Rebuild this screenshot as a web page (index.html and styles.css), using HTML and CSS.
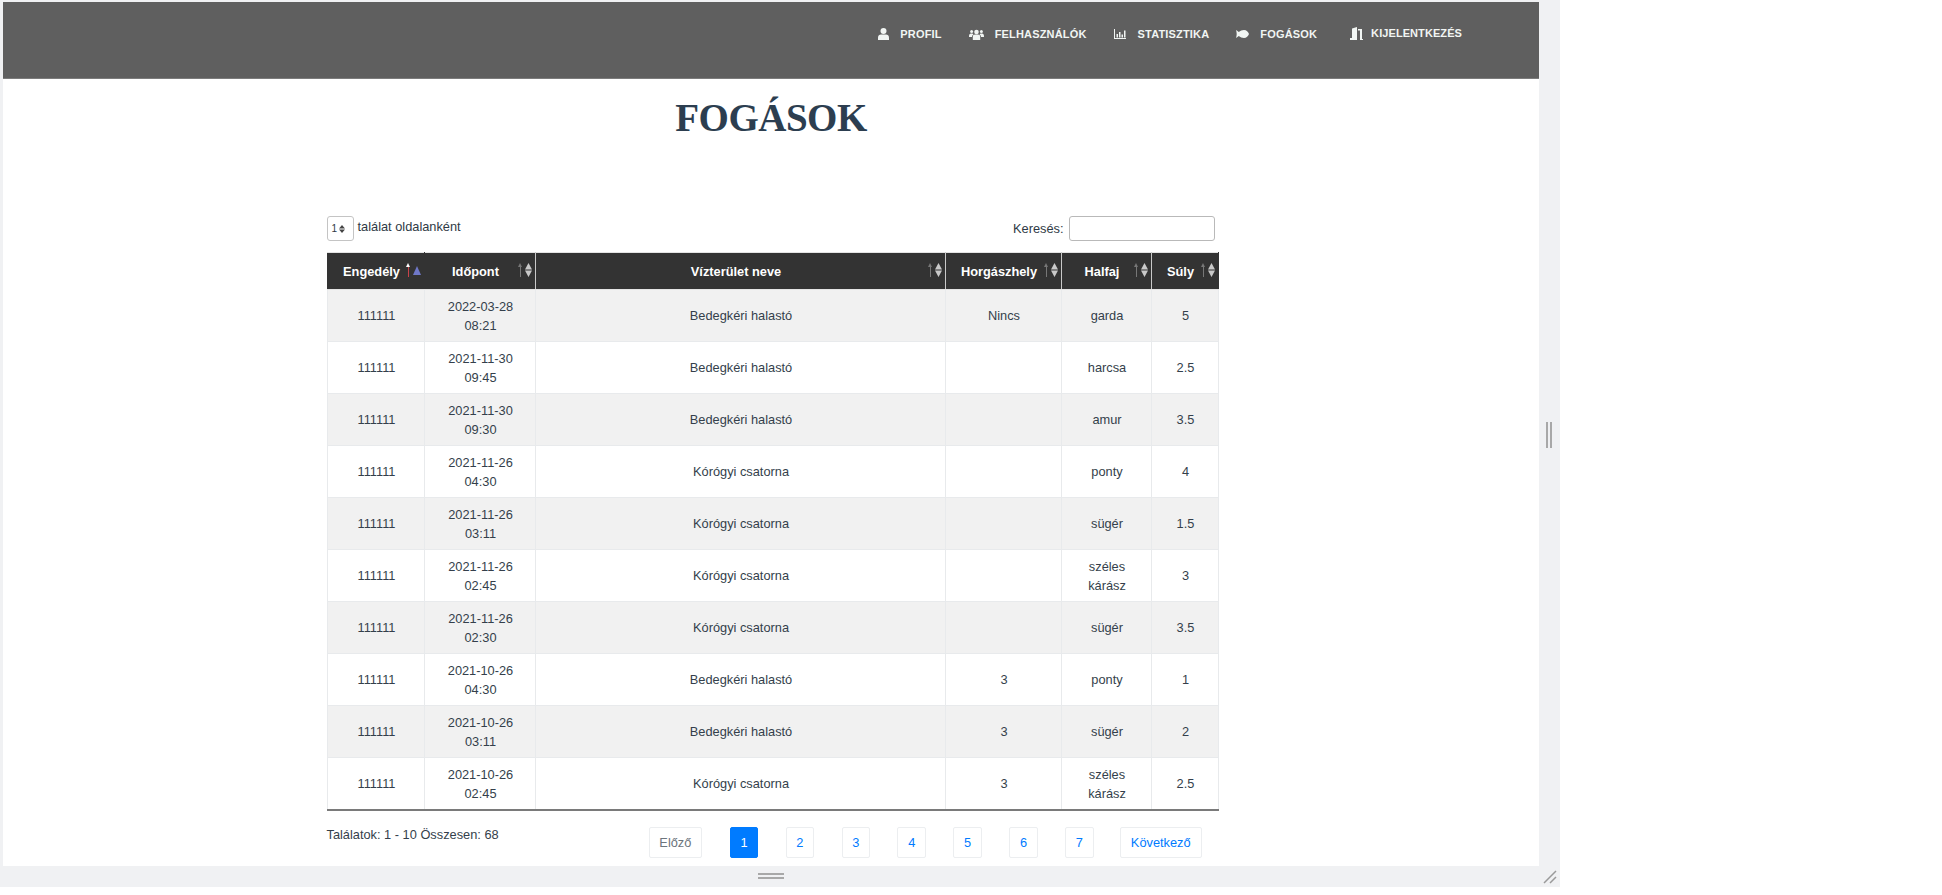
FILE: index.html
```html
<!DOCTYPE html>
<html>
<head>
    <meta charset="UTF-8">
    <title>Fogások</title>
    <link rel="stylesheet" href="styles.css">
</head>
<body>
<div class="frame">
    <div class="page">
        <nav class="nav">
            <a class="nav-link">
                <svg class="ico" width="11" height="12" viewBox="0 0 11 12"><circle cx="5.5" cy="3" r="3"/><path d="M0 12V9.5C0 7.8 1.3 6.6 3 6.6h5c1.7 0 3 1.2 3 2.9V12z"/></svg>
                PROFIL
            </a>
            <a class="nav-link">
                <svg class="ico" width="15" height="11" viewBox="0 0 15 11"><circle cx="7.5" cy="3" r="2.3"/><circle cx="2.6" cy="2.4" r="1.5"/><circle cx="12.4" cy="2.4" r="1.5"/><path d="M3.8 11V8c0-1.6 1-2.4 2.2-2.4h3c1.2 0 2.2.8 2.2 2.4v3z"/><path d="M0 7.5C0 5.5.8 4.6 2 4.6h1.5c.3.4.6.7 1 1C3.400 6 3 7 3 8H0zM15 7.500C15 5.500 14.200 4.600 13 4.600h-1.500c-.3.4-.6.7-1 1 1.100.4 1.500 1.400 1.500 2.400h3z"/></svg>
                FELHASZNÁLÓK
            </a>
            <a class="nav-link nav-link-chart">
                <svg class="ico" width="12" height="10" viewBox="0 0 12 10"><path d="M0 0h1v9h11v1H0zM2.500 5h1.500v3.500H2.500zM5 3h1.500v5.500H5zM7.500 5.500H9v3H7.500zM10 1.500h1.500v7H10z"/></svg>
                STATISZTIKA
            </a>
            <a class="nav-link">
                <svg class="ico" width="13" height="8" viewBox="0 0 13 8"><path d="M0 0c1 .6 2 1.300 2.800 2C4.300.8 6 0 8 0c2.500 0 4.200 2 5 4-.8 2-2.500 4-5 4-2 0-3.700-.8-5.200-2C2 6.700 1 7.400 0 8c.4-1.300.7-2.700.7-4S.4 1.300 0 0z"/></svg>
                FOGÁSOK
            </a>
            <a class="nav-link nav-link-door">
                <svg class="ico" width="14" height="13" viewBox="0 0 14 13"><path d="M1 13h7V0L3 1.500V11H1zM9 2h4v10h1v1h-3V3.500H9z"/></svg>
                KIJELENTKEZÉS
            </a>
        </nav>

        <h1 class="title">FOGÁSOK</h1>

        <div class="wrap">
            <div class="tools">
                <label class="length">
                    <span class="length-box">1<svg class="diamond" width="6" height="8" viewBox="0 0 6 8"><path d="M3 0l3 3.500H0zM3 8L0 4.500h6z"/></svg></span>
                    találat oldalanként
                </label>
                <label class="search">Keresés: <input class="search-input" type="text"></label>
            </div>

            <table class="catches">
                <colgroup>
                    <col class="c-lic"><col class="c-time"><col class="c-water"><col class="c-place"><col class="c-fish"><col class="c-weight">
                </colgroup>
                <thead>
                <tr>
                    <th>Engedély<span class="sort"><i class="arr arr-on"></i><svg width="8" height="9" viewBox="0 0 8 9"><path d="M4 0l4 9H0z" fill="#6f78c8"/></svg></span></th>
                    <th>Időpont<span class="sort"><i class="arr"></i><svg width="7" height="14" viewBox="0 0 7 14"><path d="M3.500 0L7 6.500H0zM3.500 14L0 7.500h7z" fill="#c9c9c9"/></svg></span></th>
                    <th>Vízterület neve<span class="sort"><i class="arr"></i><svg width="7" height="14" viewBox="0 0 7 14"><path d="M3.500 0L7 6.500H0zM3.500 14L0 7.500h7z" fill="#c9c9c9"/></svg></span></th>
                    <th>Horgászhely<span class="sort"><i class="arr"></i><svg width="7" height="14" viewBox="0 0 7 14"><path d="M3.500 0L7 6.500H0zM3.500 14L0 7.500h7z" fill="#c9c9c9"/></svg></span></th>
                    <th>Halfaj<span class="sort"><i class="arr"></i><svg width="7" height="14" viewBox="0 0 7 14"><path d="M3.500 0L7 6.500H0zM3.500 14L0 7.500h7z" fill="#c9c9c9"/></svg></span></th>
                    <th>Súly<span class="sort"><i class="arr"></i><svg width="7" height="14" viewBox="0 0 7 14"><path d="M3.500 0L7 6.500H0zM3.500 14L0 7.500h7z" fill="#c9c9c9"/></svg></span></th>
                </tr>
                </thead>
                <tbody>
                <tr><td>111111</td><td>2022-03-28<br>08:21</td><td>Bedegkéri halastó</td><td>Nincs</td><td>garda</td><td>5</td></tr>
                <tr><td>111111</td><td>2021-11-30<br>09:45</td><td>Bedegkéri halastó</td><td></td><td>harcsa</td><td>2.5</td></tr>
                <tr><td>111111</td><td>2021-11-30<br>09:30</td><td>Bedegkéri halastó</td><td></td><td>amur</td><td>3.5</td></tr>
                <tr><td>111111</td><td>2021-11-26<br>04:30</td><td>Kórógyi csatorna</td><td></td><td>ponty</td><td>4</td></tr>
                <tr><td>111111</td><td>2021-11-26<br>03:11</td><td>Kórógyi csatorna</td><td></td><td>sügér</td><td>1.5</td></tr>
                <tr><td>111111</td><td>2021-11-26<br>02:45</td><td>Kórógyi csatorna</td><td></td><td>széles<br>kárász</td><td>3</td></tr>
                <tr><td>111111</td><td>2021-11-26<br>02:30</td><td>Kórógyi csatorna</td><td></td><td>sügér</td><td>3.5</td></tr>
                <tr><td>111111</td><td>2021-10-26<br>04:30</td><td>Bedegkéri halastó</td><td>3</td><td>ponty</td><td>1</td></tr>
                <tr><td>111111</td><td>2021-10-26<br>03:11</td><td>Bedegkéri halastó</td><td>3</td><td>sügér</td><td>2</td></tr>
                <tr><td>111111</td><td>2021-10-26<br>02:45</td><td>Kórógyi csatorna</td><td>3</td><td>széles<br>kárász</td><td>2.5</td></tr>
                </tbody>
            </table>

            <div class="foot">
                <div class="info">Találatok: 1 - 10 Összesen: 68</div>
                <div class="pager">
                    <a class="pg pg-prev">Előző</a>
                    <a class="pg pg-num pg-active">1</a>
                    <a class="pg pg-num">2</a>
                    <a class="pg pg-num">3</a>
                    <a class="pg pg-num">4</a>
                    <a class="pg pg-num">5</a>
                    <a class="pg pg-num">6</a>
                    <a class="pg pg-num">7</a>
                    <a class="pg pg-next">Következő</a>
                </div>
            </div>
        </div>
    </div>

    <span class="grip-v"></span>
    <span class="grip-h"></span>
    <svg class="grip-corner" width="14" height="14" viewBox="0 0 14 14"><path d="M1 13L13 1M7 13l6-6" stroke="#9a9a9a" stroke-width="1.500" fill="none"/></svg>
</div>
</body>
</html>
```

FILE: styles.css
```css
* {
    margin: 0;
    padding: 0;
    box-sizing: border-box;
}

html, body {
    width: 100%;
    height: 100%;
    overflow: hidden;
    background: #fff;
}

body {
    font-family: "Liberation Sans", Arial, sans-serif;
    font-size: 12.8px;
    color: #343f4b;
}

.frame {
    position: relative;
    width: 1560px;
    height: 887px;
    padding: 2px 21px 21px 3px;
    background: #f0f1f3;
}

.page {
    height: 100%;
    background: #fff;
    overflow: hidden;
}

/* felso menu */
.nav {
    display: flex;
    justify-content: flex-end;
    align-items: flex-start;
    height: 77px;
    padding: 22px 77px 0 0;
    background: #5f5f5f;
    border-bottom: 1px solid #7c7c7c;
}

.nav-link {
    display: flex;
    align-items: center;
    gap: 11px;
    margin-left: 27px;
    height: 20px;
    font-size: 11px;
    font-weight: bold;
    letter-spacing: .17px;
    color: #f1f5f3;
}

.nav-link-chart {
    gap: 12px;
}

.nav-link-door {
    gap: 8px;
    margin-top: -1px;
    margin-left: 32px;
    letter-spacing: .08px;
}

.ico {
    fill: #f1f5f3;
}

.title {
    margin-top: 15px;
    font-family: "Liberation Serif", serif;
    font-size: 39px;
    line-height: 48px;
    letter-spacing: -.5px;
    font-weight: bold;
    text-align: center;
    color: #2c3e50;
}

.wrap {
    width: 895px;
    margin: 0 auto;
    padding-left: 3px;
}

.tools {
    display: flex;
    justify-content: space-between;
    margin-top: 74px;
    padding-right: 4px;
}

.length, .search {
    display: flex;
    align-items: center;
    gap: 4px;
    height: 25px;
    color: #2f3a45;
}

.search {
    gap: 5px;
}

.length {
    align-items: flex-start;
    line-height: 22px;
}

.length-box {
    display: flex;
    align-items: center;
    gap: 2px;
    width: 27px;
    height: 25px;
    padding-left: 4px;
    border: 1px solid #c4c4c4;
    border-radius: 3px;
    font-size: 10px;
}

.diamond {
    fill: #444;
}

.search-input {
    width: 146px;
    height: 25px;
    border: 1px solid #b9b9b9;
    border-radius: 3px;
    background: #fff;
}

.catches {
    width: 891px;
    margin-top: 11px;
    table-layout: fixed;
    border-collapse: collapse;
    border-bottom: 2px solid #7a7a7a;
}

.c-lic { width: 97px; }
.c-time { width: 111px; }
.c-water { width: 410px; }
.c-place { width: 116px; }
.c-fish { width: 90px; }
.c-weight { width: 67px; }

.catches th {
    position: relative;
    height: 37px;
    padding: 0 15px 0 7px;
    border: 1px solid #c9c9c9;
    border-top: 1px solid #e4e4e4;
    border-bottom: 1px solid #e4e4e4;
    background: #333;
    color: #fff;
    font-weight: bold;
    text-align: center;
}

.catches th:first-child, .catches th:last-child {
    border-left-color: #333;
    border-right-color: #333;
}

.sort {
    position: absolute;
    top: 9px;
    right: 3px;
    display: flex;
    align-items: center;
    gap: 2px;
    height: 16px;
}

.arr {
    position: relative;
    display: block;
    width: 5px;
    height: 14px;
}

.arr:before {
    content: "";
    position: absolute;
    left: 2px;
    top: 3px;
    width: 1px;
    height: 11px;
    background: #777;
}

.arr:after {
    content: "";
    position: absolute;
    left: 0;
    top: 0;
    border: 2.5px solid transparent;
    border-top: 0;
    border-bottom: 4px solid #777;
}

.arr-on:before {
    background: #c9424a;
}

.arr-on:after {
    border-bottom-color: #fff;
}

.catches td {
    padding: 6.5px 3px 6.5px 5px;
    border: 1px solid #e8eaec;
    line-height: 19px;
    text-align: center;
    height: 52px;
}

.catches tbody tr:nth-child(odd) td {
    background: #f1f1f1;
}

.foot {
    display: flex;
    justify-content: space-between;
    align-items: flex-start;
    padding-right: 17px;
}

.info {
    margin-top: 16px;
}

.pager {
    display: flex;
    gap: 27.400px;
    margin-top: 16px;
}

.pg {
    display: flex;
    align-items: center;
    justify-content: center;
    height: 31px;
    border: 1px solid #eceef0;
    border-radius: 2px;
    color: #007bff;
    background: #fff;
}

.pg-num {
    width: 28.500px;
}

.pg-prev {
    width: 53px;
    margin-right: .5px;
    color: #6c757d;
}

.pg-next {
    width: 81.500px;
    margin-left: -1px;
}

.pg-active {
    background: #007bff;
    border-color: #007bff;
    color: #fff;
}

/* atmeretezo fogantyuk */
.grip-v {
    position: absolute;
    left: 1546px;
    top: 422px;
    width: 6px;
    height: 26px;
    border-left: 2px solid #a8a8a8;
    border-right: 2px solid #a8a8a8;
}

.grip-h {
    position: absolute;
    left: 758px;
    top: 873px;
    width: 26px;
    height: 6px;
    border-top: 2px solid #a8a8a8;
    border-bottom: 2px solid #a8a8a8;
}

.grip-corner {
    position: absolute;
    left: 1543px;
    top: 870px;
}
```
